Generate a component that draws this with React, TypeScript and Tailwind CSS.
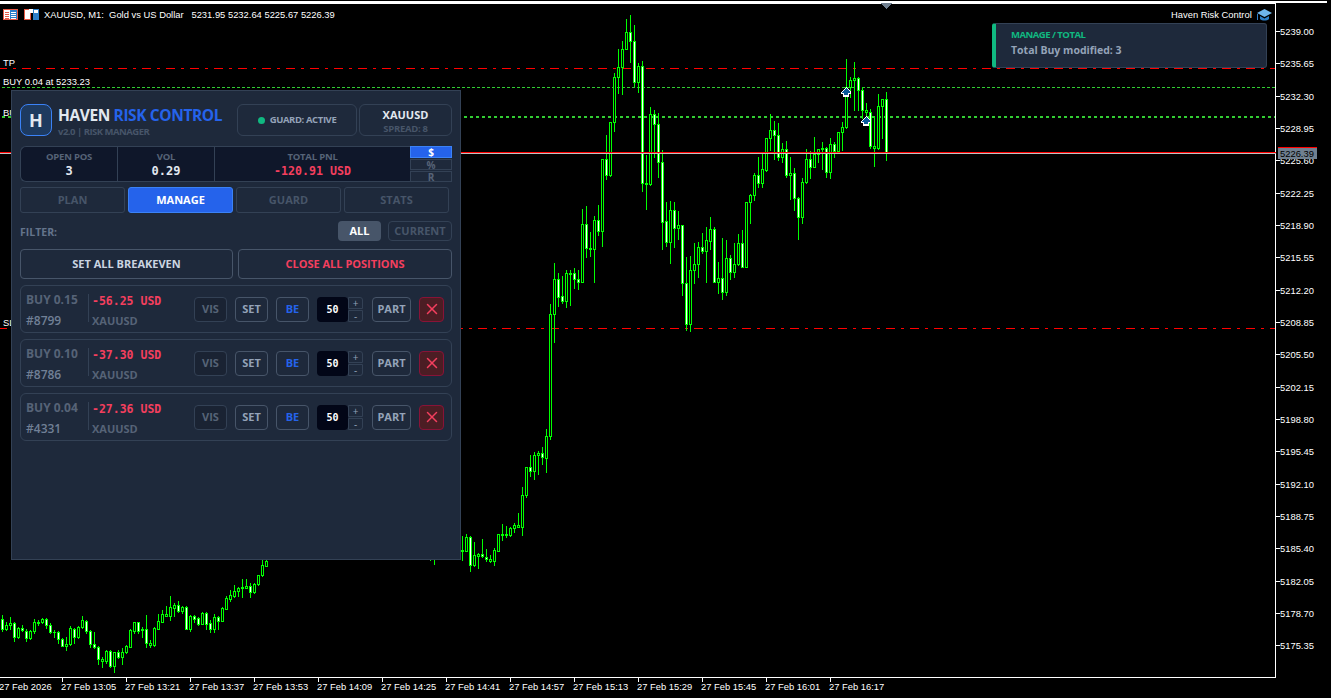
import { X } from "lucide-react";

type Row = [number, number, number, number, number?];

// rows are [wick top, wick bottom, body top, body bottom, white body] read off the chart at 3x
const seg = (startX: number, offY: number, rows: Row[]) =>
  rows.map(([wt, wb, bt, bb, w], i) => ({
    x: startX + i * 4,
    high: Math.round(offY + wt / 3),
    low: Math.round(offY + wb / 3),
    top: Math.round(offY + bt / 3),
    bottom: Math.round(offY + bb / 3),
    white: !!w,
  }));

const candles = [
  ...seg(2, 590, [
    [75, 122, 88, 118, 1], [97, 120, 106, 118], [82, 116, 100, 106], [95, 152, 100, 140, 1], [110, 145, 115, 140],
    [106, 123, 115, 120, 1], [118, 152, 122, 144, 1], [120, 147, 122, 144], [88, 128, 97, 122], [90, 105, 97, 99],
    [85, 100, 88, 97], [85, 113, 88, 106, 1], [100, 130, 106, 125, 1], [120, 140, 125, 127], [123, 158, 125, 147, 1],
    [143, 168, 146, 167, 1], [140, 180, 163, 167], [108, 165, 115, 163], [113, 158, 116, 140, 1], [108, 143, 110, 140],
    [78, 114, 91, 110], [90, 130, 92, 122, 1], [120, 170, 122, 161, 1], [125, 174, 161, 172, 1], [168, 222, 172, 206, 1],
    [200, 230, 206, 212], [180, 220, 182, 212], [180, 232, 182, 228, 1], [186, 246, 187, 228], [180, 203, 187, 200, 1],
    [175, 222, 187, 200], [165, 190, 168, 187], [117, 172, 120, 170], [96, 130, 97, 122], [96, 128, 97, 122, 1],
  ]),
  ...seg(142, 550, [
    [232, 260, 238, 240], [195, 290, 238, 279, 1], [270, 290, 279, 285], [232, 288, 235, 285], [192, 238, 213, 236],
    [180, 216, 192, 215], [168, 198, 193, 197], [138, 210, 171, 198], [160, 197, 166, 174], [153, 187, 166, 183, 1],
    [168, 188, 171, 183], [168, 237, 172, 236, 1], [195, 243, 198, 237], [195, 217, 198, 207, 1], [200, 225, 204, 221, 1],
    [185, 223, 189, 221], [185, 237, 189, 221, 1], [210, 245, 220, 236, 1], [192, 245, 202, 236], [198, 237, 202, 212, 1],
    [172, 213, 175, 212], [138, 178, 145, 177], [120, 152, 136, 146], [105, 140, 124, 137], [110, 138, 115, 124],
    [87, 140, 111, 115], [87, 115, 109, 113], [100, 140, 109, 127, 1], [98, 129, 102, 127], [75, 105, 76, 103],
    [30, 78, 46, 76], [0, 48, 32, 47],
  ]),
  // only the two wicks that stick out under the panel
  { x: 430, high: 550, low: 560, top: 552, bottom: 552, white: false },
  { x: 434, high: 550, low: 564, top: 552, bottom: 552, white: false },
  ...seg(462, 240, [
    [888, 960, 931, 934], [882, 932, 892, 932], [888, 992, 892, 976, 1], [905, 978, 946, 976], [940, 983, 942, 948],
    [897, 950, 943, 949, 1], [927, 964, 950, 958, 1], [945, 965, 958, 962], [925, 975, 930, 962], [882, 932, 883, 932],
    [852, 900, 881, 884], [858, 890, 881, 884], [860, 887, 865, 885], [848, 875, 856, 865], [820, 862, 856, 860],
    [742, 885, 766, 860], [680, 770, 682, 766], [645, 708, 682, 694, 1], [635, 717, 646, 694], [633, 702, 640, 646],
    [622, 672, 640, 652, 1], [568, 695, 589, 653], [192, 596, 223, 589], [68, 305, 118, 223], [100, 197, 118, 170, 1],
  ]),
  ...seg(562, 0, [
    [828, 910, 888, 902, 1], [810, 920, 820, 902], [810, 914, 819, 822], [805, 865, 820, 838, 1], [810, 866, 838, 845, 1],
    [628, 846, 672, 845], [618, 770, 672, 745, 1], [696, 768, 744, 748], [648, 845, 660, 748], [615, 705, 660, 692, 1],
    [478, 738, 478, 692], [405, 536, 478, 524, 1], [365, 527, 367, 524], [220, 392, 232, 367], [148, 278, 202, 232],
    [124, 282, 146, 202], [57, 146, 97, 146], [45, 185, 97, 124, 1], [75, 258, 124, 245, 1], [190, 275, 198, 245],
    [183, 572, 198, 550, 1], [465, 626, 550, 553], [322, 555, 343, 553], [330, 472, 343, 373, 1], [340, 530, 373, 487, 1],
    [450, 746, 487, 665, 1], [606, 738, 664, 727, 1], [603, 790, 630, 727], [606, 742, 630, 685, 1], [633, 716, 676, 685],
    [676, 885, 676, 848, 1], [770, 990, 848, 973, 1], [768, 992, 810, 973], [730, 850, 793, 811], [727, 830, 742, 793],
    [700, 760, 742, 752, 1], [680, 845, 720, 752], [652, 748, 688, 722], [680, 845, 688, 845, 1], [785, 880, 835, 845],
    [714, 898, 835, 877, 1], [720, 885, 775, 877], [765, 838, 775, 815, 1], [730, 830, 793, 815], [702, 795, 730, 793],
    [690, 802, 730, 800, 1], [605, 800, 607, 800], [583, 668, 586, 607], [520, 600, 526, 586], [470, 560, 526, 550, 1],
    [457, 560, 508, 550], [415, 512, 415, 510], [343, 450, 391, 415], [362, 476, 391, 406, 1], [370, 480, 406, 472, 1],
    [430, 485, 448, 472], [422, 532, 448, 526, 1], [470, 598, 520, 526], [505, 630, 520, 595, 1], [590, 716, 595, 652, 1],
    [535, 668, 545, 652], [448, 550, 478, 545], [453, 535, 478, 500, 1], [412, 502, 462, 500], [450, 485, 448, 462],
    [425, 508, 445, 448], [440, 530, 445, 517, 1], [415, 533, 433, 517], [425, 472, 433, 452, 1], [397, 460, 397, 452],
    [367, 450, 382, 397], [178, 384, 260, 382], [232, 290, 241, 260], [186, 330, 235, 241], [230, 330, 235, 271, 1],
    [262, 355, 271, 331, 1], [310, 365, 331, 335], [328, 445, 335, 439, 1], [350, 497, 439, 445], [282, 447, 319, 445],
    [297, 415, 298, 319], [277, 480, 298, 460, 1],
  ]),
];

const prices = [
  "5239.00", "5235.65", "5232.30", "5228.95", "5225.60", "5222.25", "5218.90", "5215.55", "5212.20", "5208.85",
  "5205.50", "5202.15", "5198.80", "5195.45", "5192.10", "5188.75", "5185.40", "5182.05", "5178.70", "5175.35",
];

const times = ["13:05", "13:21", "13:37", "13:53", "14:09", "14:25", "14:41", "14:57", "15:13", "15:29", "15:45", "16:01", "16:17"];

const chartText = "font-['Liberation_Sans',sans-serif] text-[9.4px] fill-white";

const TradeArrow = ({ x, y }: { x: number; y: number }) => (
  <g transform={`translate(${x} ${y})`} shapeRendering="crispEdges">
    <polygon points="0,-5 5,0 5,2 3,2 3,5 -3,5 -3,2 -5,2 -5,0" fill="#ffffff" />
    <polygon points="0,-4 4,0 4,1 2,1 2,3 -2,3 -2,1 -4,1 -4,0" fill="#0b5a9a" />
  </g>
);

const Chart = () => (
  <svg width="1331" height="698" className="block bg-black">
    <g shapeRendering="crispEdges">
      <rect x="0" y="1" width="1327" height="2" fill="#ffffff" />
      <rect x="0" y="3" width="1276" height="1" fill="#ffffff" />
      <rect x="1275" y="3" width="1" height="675" fill="#ffffff" />
      <rect x="0" y="677" width="1276" height="1" fill="#ffffff" />
      <line x1="0" x2="1275" y1="68.5" y2="68.5" stroke="#ff0000" strokeDasharray="9 6 3 6" strokeDashoffset="2" />
      <line x1="0" x2="1275" y1="328.5" y2="328.5" stroke="#ff0000" strokeDasharray="9 6 3 6" strokeDashoffset="2" />
      <line x1="2" x2="1275" y1="87.5" y2="87.5" stroke="#32cd32" strokeDasharray="3 2" />
      <line x1="2" x2="1275" y1="117" y2="117" stroke="#32cd32" strokeWidth="2" strokeDasharray="3 3" />
      {candles.map((c) => (
        <g key={c.x}>
          <rect x={c.x} y={c.high} width="1" height={c.low - c.high + 1} fill="#00ff00" />
          <rect x={c.x - 1} y={c.top} width="3" height={c.bottom - c.top + 1} fill="#00ff00" />
          {c.bottom - c.top > 1 && (
            <rect x={c.x} y={c.top + 1} width="1" height={c.bottom - c.top - 1} fill={c.white ? "#ffffff" : "#000000"} />
          )}
        </g>
      ))}
      <rect x="0" y="152" width="1276" height="1" fill="#ff0000" />
      <rect x="0" y="153" width="1276" height="1" fill="#c0c0c0" />
      <polygon points="881,3 892,3 886.5,9" fill="#708090" />
      {prices.map((_, i) => (
        <rect key={i} x="1276" y={Math.round(31 + i * 32.33)} width="4" height="1" fill="#ffffff" />
      ))}
      {times.map((_, i) => (
        <rect key={i} x={62 + i * 64} y="678" width="1" height="4" fill="#ffffff" />
      ))}
      <rect x="1278" y="147" width="39" height="1" fill="#ff0000" />
    </g>

    <TradeArrow x={846} y={92} />
    <TradeArrow x={866} y={121} />

    {/* chart header icons */}
    <g shapeRendering="crispEdges">
      <rect x="3.5" y="9.5" width="14" height="10" fill="#ffffff" stroke="#e65a46" />
      <rect x="10" y="10" width="7" height="9" fill="#2d7fc9" />
      <path d="M5 12h4M5 14h4M5 16h4M5 18h4" stroke="#e65a46" />
      <path d="M11 12h5M11 14h5M11 16h5M11 18h5" stroke="#ffffff" />
      <rect x="24.5" y="9.5" width="6" height="10" fill="#ffffff" stroke="#e65a46" />
      <rect x="33" y="9" width="6" height="11" fill="#2d7fc9" />
      <rect x="29" y="9" width="4" height="4" fill="#ffffff" />
      <rect x="34" y="10" width="4" height="3" fill="#ffffff" />
    </g>
    <text x="44" y="18" className={chartText} xmlSpace="preserve">
      XAUUSD, M1:  Gold vs US Dollar   5231.95 5232.64 5225.67 5226.39
    </text>
    <text x="1171" y="18" className={chartText}>Haven Risk Control</text>

    {/* graduation cap */}
    <g>
      <polygon points="1264.5,9 1272,13 1264.5,17 1257,13" fill="#6fb6ee" />
      <path d="M1260 16v3c2 2 7 2 9 0v-3l-4.500 2.500z" fill="#2d7fc9" />
      <rect x="1257" y="14" width="1" height="6" fill="#2d7fc9" />
    </g>

    <text x="3" y="66" className={chartText}>TP</text>
    <text x="3" y="85" className={chartText}>BUY 0.04 at 5233.23</text>
    <text x="3" y="116" className={chartText}>BU</text>
    <text x="3" y="326" className={chartText}>SL</text>

    {prices.map((p, i) => (
      <text key={p} x="1280" y={Math.round(35 + i * 32.33)} className={chartText}>{p}</text>
    ))}
    <rect x="1278" y="148" width="39" height="11" fill="#708090" shapeRendering="crispEdges" />
    <text x="1280" y="157" className="font-['Liberation_Sans',sans-serif] text-[9.4px] fill-black">5226.39</text>

    <text x="-1" y="690" className={chartText}>27 Feb 2026</text>
    {times.map((t, i) => (
      <text key={t} x={61 + i * 64} y="690" className={chartText}>27 Feb {t}</text>
    ))}
  </svg>
);

const mono = "font-['DejaVu_Sans_Mono',monospace]";
const rowBtn = "flex h-[25px] items-center justify-center rounded-[4px] border pt-px text-[11px] font-bold";

const PositionCard = ({ lots, ticket, pnl }: { lots: string; ticket: string; pnl: string }) => (
  <div className="flex h-[48px] items-center rounded-[6px] border border-[#334155] pl-[5px] pr-[7px]">
    <div className="flex w-[62px] flex-col justify-between self-stretch pb-[4px] pt-[7px]">
      <span className="text-[12px] font-bold leading-[14px] text-[#566377]">BUY {lots}</span>
      <span className="text-[12px] font-semibold leading-[14px] text-[#718096]">#{ticket}</span>
    </div>
    <div className="h-[28px] w-px -translate-y-[1px] bg-[#334155]" />
    <div className="ml-[3px] flex flex-col justify-between self-stretch pb-[4px] pt-[8px]">
      <span className={`${mono} text-[11.5px] font-bold leading-[14px] text-[#f43f5e]`}>{pnl} USD</span>
      <span className="text-[11px] font-bold leading-[14px] text-[#566377]">XAUUSD</span>
    </div>
    <div className="ml-auto flex items-center gap-[8px]">
      <button className={`${rowBtn} w-[33px] border-[#334155] bg-[#1a2333] text-[#566377]`}>VIS</button>
      <button className={`${rowBtn} w-[33px] border-[#475569] text-[#94a3b8]`}>SET</button>
      <button className={`${rowBtn} w-[33px] border-[#475569] text-[#2563eb]`}>BE</button>
      <div className="flex h-[25px] w-[46px]">
        <div className={`${mono} flex w-[31px] items-center justify-center rounded-[4px] bg-[#020617] text-[10px] font-bold text-white`}>50</div>
        <div className="flex w-[15px] flex-col gap-px">
          <span className="flex h-[12px] items-center justify-center rounded-tr-[3px] border border-[#334155] text-[10px] leading-none text-[#94a3b8]">+</span>
          <span className="flex h-[12px] items-center justify-center rounded-br-[3px] border border-[#334155] text-[10px] leading-none text-[#94a3b8]">-</span>
        </div>
      </div>
      <button className={`${rowBtn} ml-px w-[39px] border-[#475569] text-[#94a3b8]`}>PART</button>
      <button className="flex h-[25px] w-[25px] items-center justify-center rounded-[4px] border border-[#881337] bg-[#4c1d24] text-[#f43f5e]">
        <X size={18} strokeWidth={2} />
      </button>
    </div>
  </div>
);

const Panel = () => (
  <div className="absolute left-[11px] top-[90px] h-[470px] w-[450px] border border-[#334155] bg-[#1e293b] px-[8px] pt-[13px] font-['Open_Sans',sans-serif]">
    <div className="flex h-[32px] items-start">
      <div className="flex h-[32px] w-[32px] items-center justify-center rounded-[8px] border border-[#3b82f6] bg-[#1e3a5f] text-[18px] font-bold text-[#e2e8f0]">H</div>
      <div className="ml-[6px] flex flex-col pt-px">
        <span className="text-[15.5px] font-bold leading-[20px] tracking-[-0.4px] text-[#e2e8f0]">
          HAVEN <span className="text-[#2563eb]">RISK CONTROL</span>
        </span>
        <span className="mt-[1px] text-[9.5px] font-bold leading-[12px] tracking-[-0.5px] text-[#475569]">v2.0 | RISK MANAGER</span>
      </div>
      <div className="ml-auto flex h-[32px] w-[120px] items-center justify-center gap-[5px] rounded-[6px] border border-[#334155] text-[9.5px] font-bold tracking-[-0.4px] text-[#94a3b8]">
        <span className="h-[7px] w-[7px] rounded-full bg-[#10b981]" />
        GUARD: ACTIVE
      </div>
      <div className="ml-[2px] flex h-[32px] w-[93px] flex-col items-center rounded-[6px] border border-[#334155] pt-[2px]">
        <span className="text-[11px] font-bold leading-[15px] text-[#e2e8f0]">XAUUSD</span>
        <span className="mt-px text-[9.5px] font-bold leading-[12px] tracking-[-0.3px] text-[#475569]">SPREAD: 8</span>
      </div>
    </div>

    <div className="mt-[10px] flex h-[36px]">
      <div className="flex flex-1 rounded-l-[6px] border border-r-0 border-[#334155] bg-[#0f172a]">
        <div className="flex w-[97px] flex-col items-center justify-center border-r border-[#334155] pt-px">
          <span className="text-[9.5px] font-bold leading-[14px] tracking-[-0.2px] text-[#566377]">OPEN POS</span>
          <span className={`${mono} text-[12px] font-bold leading-[15px] text-[#e2e8f0]`}>3</span>
        </div>
        <div className="flex w-[97px] flex-col items-center justify-center border-r border-[#334155] pt-px">
          <span className="text-[9.5px] font-bold leading-[14px] tracking-[-0.2px] text-[#566377]">VOL</span>
          <span className={`${mono} text-[12px] font-bold leading-[15px] text-[#e2e8f0]`}>0.29</span>
        </div>
        <div className="flex flex-1 flex-col items-center justify-center pt-px">
          <span className="text-[9.5px] font-bold leading-[14px] tracking-[-0.2px] text-[#566377]">TOTAL PNL</span>
          <span className={`${mono} text-[11.6px] font-bold leading-[15px] text-[#f43f5e]`}>-120.91 USD</span>
        </div>
      </div>
      <div className="flex w-[42px] flex-col gap-px text-center text-[10px] font-bold leading-none">
        <span className="flex h-[12px] items-center justify-center border border-[#3b82f6] bg-[#2563eb] text-white">$</span>
        <span className="flex h-[11px] items-center justify-center border border-[#334155] text-[#566377]">%</span>
        <span className="flex h-[11px] items-center justify-center border border-[#334155] text-[#566377]">R</span>
      </div>
    </div>

    <div className="mt-[5px] flex h-[26px] gap-[3px] text-[11px] font-bold">
      <div className="flex w-[105px] items-center justify-center rounded-[3px] border border-[#334155] text-[#475569]">PLAN</div>
      <div className="flex w-[105px] items-center justify-center rounded-[3px] border border-[#3b82f6] bg-[#2563eb] text-white">MANAGE</div>
      <div className="flex w-[105px] items-center justify-center rounded-[3px] border border-[#334155] text-[#475569]">GUARD</div>
      <div className="flex w-[105px] items-center justify-center rounded-[3px] border border-[#334155] text-[#475569]">STATS</div>
    </div>

    <div className="mt-[8px] flex h-[20px] items-center text-[11px] font-bold">
      <span className="mt-[3px] text-[10.5px] text-[#64748b]">FILTER:</span>
      <div className="ml-auto flex h-[20px] w-[43px] items-center justify-center rounded-[4px] bg-[#475569] pt-px text-white">ALL</div>
      <div className="ml-[7px] flex h-[20px] w-[64px] items-center justify-center rounded-[4px] border border-[#334155] pt-px text-[#475569]">CURRENT</div>
    </div>

    <div className="mt-[8px] flex h-[30px] gap-[5px] text-[11px] font-bold">
      <div className="flex w-[213px] items-center justify-center rounded-[4px] border border-[#475569] pt-px text-[#cbd5e1]">SET ALL BREAKEVEN</div>
      <div className="flex w-[214px] items-center justify-center rounded-[4px] border border-[#475569] pt-px text-[#f43f5e]">CLOSE ALL POSITIONS</div>
    </div>

    <div className="mt-[6px] flex flex-col gap-[6px]">
      <PositionCard lots="0.15" ticket="8799" pnl="-56.25" />
      <PositionCard lots="0.10" ticket="8786" pnl="-37.30" />
      <PositionCard lots="0.04" ticket="4331" pnl="-27.36" />
    </div>
  </div>
);

const Toast = () => (
  <div className="absolute left-[992px] top-[23px] flex h-[45px] w-[275px] flex-col rounded-[3px] border border-l-[4px] border-[#334155] border-l-[#10b981] bg-[#1e293b] pl-[15px] pt-[4px] font-['Open_Sans',sans-serif]">
    <span className="text-[9.5px] font-bold leading-[14px] tracking-[-0.5px] text-[#10b981]">MANAGE / TOTAL</span>
    <span className="text-[10.5px] font-bold leading-[16px] text-[#94a3b8]">Total Buy modified: 3</span>
  </div>
);

export default function App() {
  return (
    <div className="relative h-[698px] w-[1331px] overflow-hidden bg-black">
      <Chart />
      <Panel />
      <Toast />
    </div>
  );
}
